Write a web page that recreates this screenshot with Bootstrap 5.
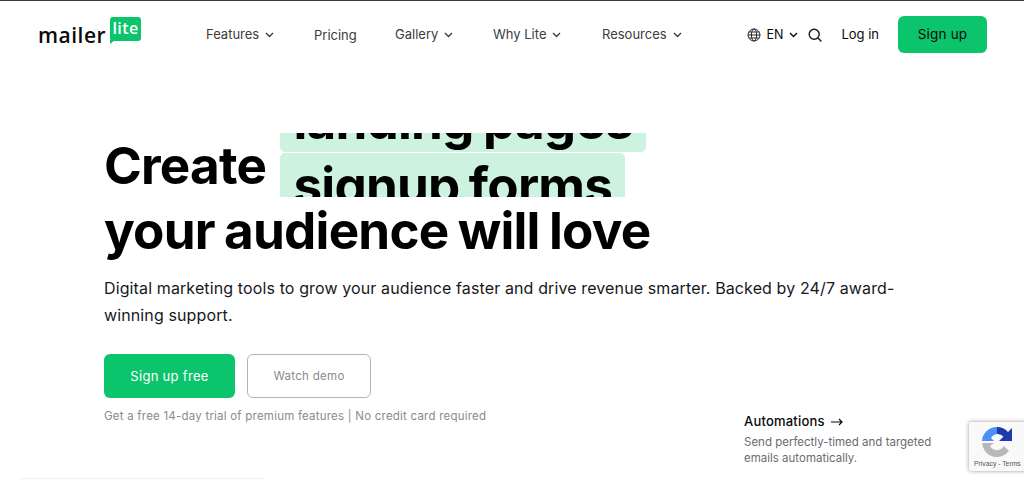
<!DOCTYPE html>
<html lang="en">

<head>
  <meta charset="UTF-8">
  <meta name="viewport" content="width=device-width, initial-scale=1.0">
  <title>MailerLite</title>
  <link href="https://cdn.jsdelivr.net/npm/bootstrap@5.3.0/dist/css/bootstrap.min.css" rel="stylesheet">
  <style>
    html, body {
      height: 481px;
      overflow: hidden;
    }

    body {
      font-family: Inter, "Liberation Sans", sans-serif;
      background: #fff;
      color: #09090b;
      border-top: 1px solid #2c3e46;
      position: relative;
    }

    .top-nav {
      height: 67px;
      padding: 0 37px 0 39px;
    }

    .brand {
      width: 102px;
      height: 36px;
      margin-top: 1px;
      color: #0b0b0b;
    }

    .brand-word {
      font-family: "Open Sans", sans-serif;
      font-size: 21px;
      font-weight: 600;
      line-height: 1;
      margin-top: 8px;
      margin-left: -1px;
      letter-spacing: .5px;
    }

    .brand-bubble {
      position: relative;
      width: 32px;
      height: 24px;
      margin-left: 4px;
      background: #0cc46c;
      border-radius: 3px;
      color: #fff;
      font-family: "Open Sans", sans-serif;
      font-size: 16px;
      font-weight: 600;
      line-height: 22px;
      text-align: center;
      letter-spacing: .4px;
    }

    .brand-bubble::after {
      content: "";
      position: absolute;
      left: 0;
      bottom: -3px;
      border-top: 4px solid #0cc46c;
      border-right: 5px solid transparent;
    }

    .nav-main {
      margin-left: 65px;
      font-size: 13px;
      color: #3c3c40;
    }

    .nav-main a, .nav-end a {
      color: inherit;
      text-decoration: none;
      white-space: nowrap;
    }

    .nav-features { width: 108px; }
    .nav-pricing { width: 81px; margin-top: 2px; }
    .nav-gallery { width: 98px; }
    .nav-why { width: 109px; }

    .chev {
      width: 9px;
      height: 6px;
      margin-left: 6px;
      vertical-align: 1px;
    }

    .nav-end {
      margin-left: auto;
      font-size: 13px;
    }

    .lang {
      color: #3c3c40;
      font-size: 12.5px;
      width: 57px;
    }

    .lang-code {
      margin: 1px 0 0 1px;
    }

    .login {
      color: #18181b;
      margin: 0 19px;
      font-size: 13px;
    }

    .btn-green {
      background: #0cc46c;
      border: 0;
      color: #fff;
      border-radius: 6px;
      font-size: 13.5px;
      letter-spacing: .2px;
    }

    .btn-green:hover {
      background: #0ab362;
      color: #fff;
    }

    .btn-signup {
      width: 89px;
      height: 37px;
      padding: 0;
      line-height: 37px;
    }

    .hero {
      padding: 65px 0 0 104px;
      width: 904px;
    }

    .headline {
      font-family: Inter, sans-serif;
      font-size: 51.2px;
      font-weight: 700;
      letter-spacing: -.8px;
      word-spacing: -2px;
      line-height: 65px;
      margin: 0;
      color: #000;
    }

    .rotator {
      display: inline-block;
      height: 64px;
      overflow: hidden;
      vertical-align: top;
      margin-left: 5px;
    }

    .rotator-track {
      margin-top: -45px;
    }

    .rotator-word {
      display: table;
      height: 64px;
      line-height: 64px;
      margin-bottom: 1px;
      padding: 0 13px;
      background: #cdf3e0;
      border-radius: 5px;
    }

    .hero-text {
      font-size: 16px;
      line-height: 27px;
      color: #18181b;
      margin: 12px 0 0;
      letter-spacing: .12px;
    }

    .btn-hero {
      width: 131px;
      height: 44px;
      padding: 0;
      line-height: 44px;
      font-size: 13px;
      letter-spacing: .3px;
    }

    .btn-demo {
      width: 124px;
      height: 44px;
      padding: 0;
      line-height: 42px;
      background: #fff;
      border: 1px solid #b4b4b8;
      color: #8a8a8f;
      border-radius: 6px;
      font-size: 11.5px;
      letter-spacing: .3px;
    }

    .hero-actions {
      margin-top: 25px;
      gap: 12px;
    }

    .hero-note {
      margin: 9px 0 0;
      font-size: 11.5px;
      line-height: 18px;
      letter-spacing: .22px;
      color: #8a8a8f;
    }

    .feature-tile {
      position: absolute;
      left: 744px;
      top: 410px;
      width: 215px;
      font-size: 11.5px;
      line-height: 16px;
      color: #6b6b70;
    }

    .feature-title {
      font-size: 13px;
      font-weight: 500;
      letter-spacing: .2px;
      color: #09090b;
      line-height: 20px;
      margin-bottom: 3px;
    }

    .title-arrow {
      margin-left: 3px;
      vertical-align: 0;
    }

    .recaptcha {
      position: absolute;
      left: 969px;
      top: 421px;
      width: 70px;
      height: 49px;
      background: #f9f9f9;
      box-shadow: 0 0 4px rgba(0, 0, 0, .4);
      border-radius: 2px;
      text-align: left;
    }

    .recaptcha svg {
      display: block;
      margin: 4px 0 0 12px;
    }

    .recaptcha-links {
      font-family: "Liberation Sans", sans-serif;
      font-size: 6.8px;
      color: #555;
      margin: 1px 0 0 5px;
      white-space: nowrap;
    }

    .peek-card {
      position: absolute;
      left: 20px;
      top: 477px;
      width: 245px;
      height: 3px;
      background: #fff;
      border: 1px solid #f0f0f0;
      border-bottom: 0;
      border-radius: 8px 8px 0 0;
      box-shadow: 0 0 24px rgba(0, 0, 0, .06);
    }

    .tile-shadow {
      position: absolute;
      left: 720px;
      top: 477px;
      width: 240px;
      height: 3px;
      background: #fff;
      box-shadow: 0 0 18px rgba(0, 0, 0, .04);
    }
  </style>
</head>

<body>
  <nav class="top-nav d-flex align-items-center">
    <a class="brand d-flex text-decoration-none" href="#">
      <span class="brand-word">mailer</span>
      <span class="brand-bubble">lite</span>
    </a>
    <div class="nav-main d-flex align-items-center">
      <a class="nav-features" href="#">Features<svg class="chev" viewBox="0 0 9 6"><path d="M1 1l3.5 3.5L8 1" fill="none" stroke="currentColor" stroke-width="1.4"/></svg></a>
      <a class="nav-pricing" href="#">Pricing</a>
      <a class="nav-gallery" href="#">Gallery<svg class="chev" viewBox="0 0 9 6"><path d="M1 1l3.5 3.5L8 1" fill="none" stroke="currentColor" stroke-width="1.4"/></svg></a>
      <a class="nav-why" href="#">Why Lite<svg class="chev" viewBox="0 0 9 6"><path d="M1 1l3.5 3.5L8 1" fill="none" stroke="currentColor" stroke-width="1.4"/></svg></a>
      <a href="#">Resources<svg class="chev" viewBox="0 0 9 6"><path d="M1 1l3.5 3.5L8 1" fill="none" stroke="currentColor" stroke-width="1.4"/></svg></a>
    </div>
    <div class="nav-end d-flex align-items-center">
      <a class="lang d-flex align-items-center" href="#">
        <svg width="14" height="14" viewBox="0 0 14 14" fill="none" stroke="#27272a" stroke-width="1" class="me-1">
          <circle cx="7" cy="7" r="6"/>
          <ellipse cx="7" cy="7" rx="2.6" ry="6"/>
          <path d="M1 7h12M1.8 4h10.4M1.8 10h10.4"/>
        </svg>
        <span class="lang-code">EN</span><svg class="chev" viewBox="0 0 9 6"><path d="M1 1l3.5 3.5L8 1" fill="none" stroke="currentColor" stroke-width="1.4"/></svg>
      </a>
      <a href="#" class="d-flex ms-1">
        <svg width="14" height="14" viewBox="0 0 14 14" fill="none" stroke="#18181b" stroke-width="1.4">
          <circle cx="6.2" cy="6.2" r="5"/>
          <path d="M10 10l3.4 3.4"/>
        </svg>
      </a>
      <a class="login" href="#">Log in</a>
      <a class="btn btn-green btn-signup" href="#">Sign up</a>
    </div>
  </nav>

  <main class="hero">
    <h1 class="headline">Create <span class="rotator"><span class="rotator-track d-block"><span class="rotator-word">landing pages</span><span class="rotator-word">signup forms</span></span></span><br>your audience will love</h1>
    <p class="hero-text">Digital marketing tools to grow your audience faster and drive revenue smarter. Backed by 24/7 award-winning support.</p>
    <div class="hero-actions d-flex">
      <a class="btn btn-green btn-hero" href="#">Sign up free</a>
      <a class="btn btn-demo" href="#">Watch demo</a>
    </div>
    <p class="hero-note">Get a free 14-day trial of premium features | No credit card required</p>
  </main>

  <div class="feature-tile">
    <div class="feature-title">Automations <svg class="title-arrow" width="12" height="8" viewBox="0 0 12 8" fill="none" stroke="#09090b" stroke-width="1.2"><path d="M0 4h11M8 1l3 3-3 3"/></svg></div>
    Send perfectly-timed and targeted<br>emails automatically.
  </div>
  <div class="tile-shadow"></div>
  <div class="peek-card"></div>

  <div class="recaptcha">
    <svg width="32" height="32" viewBox="0 0 32 32">
      <path d="M16 1a15 15 0 0 1 11 5l4-4v13H18l4.500-4.500A8 8 0 0 0 16 8z" fill="#1c3aa9"/>
      <path d="M16 1A15 15 0 0 0 1 15h12l-3-3a8 8 0 0 1 6-4z" fill="#4a90f5"/>
      <path d="M1 17A15 15 0 0 0 28 25L23 20A8 8 0 0 1 9 20L13 17z" fill="#b8b8b8"/>
    </svg>
    <div class="recaptcha-links">Privacy - Terms</div>
  </div>

  <script src="https://cdn.jsdelivr.net/npm/bootstrap@5.3.0/dist/js/bootstrap.bundle.min.js"></script>
</body>

</html>
